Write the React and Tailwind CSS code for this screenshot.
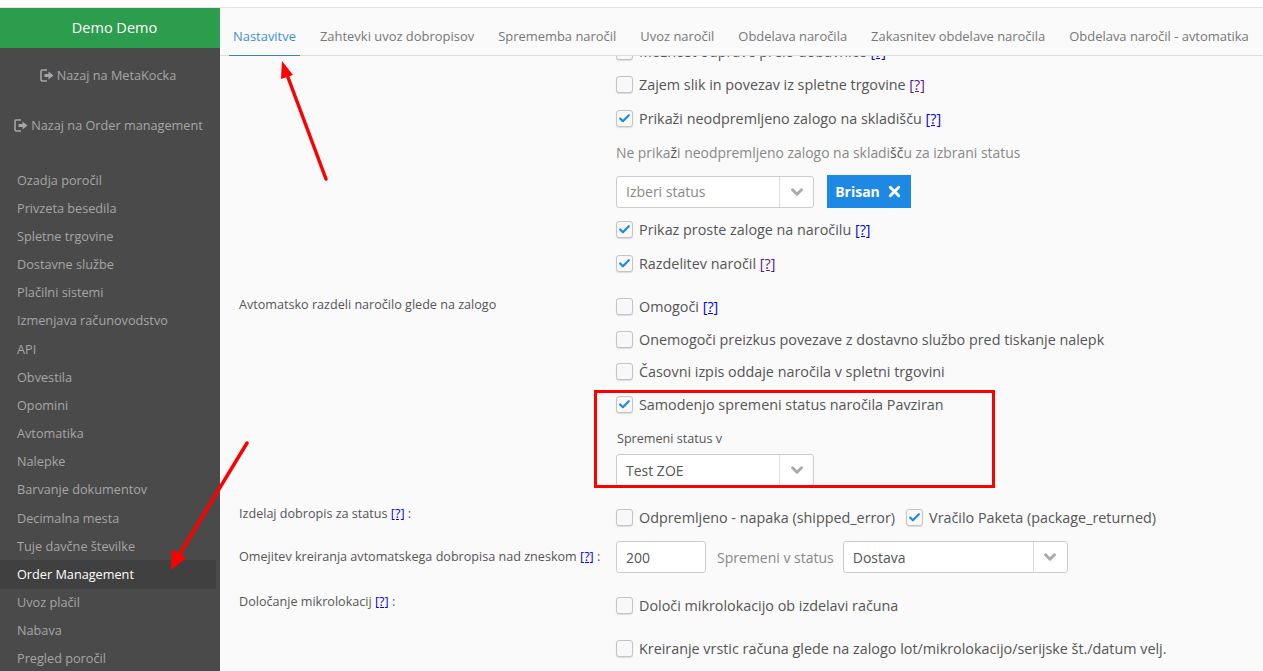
import { ChevronDown, X, Check } from "lucide-react";

const MENU = [
  "Ozadja poročil", "Privzeta besedila", "Spletne trgovine", "Dostavne službe", "Plačilni sistemi",
  "Izmenjava računovodstvo", "API", "Obvestila", "Opomini", "Avtomatika", "Nalepke",
  "Barvanje dokumentov", "Decimalna mesta", "Tuje davčne številke", "Order Management",
  "Uvoz plačil", "Nabava", "Pregled poročil",
];

const TABS = [
  "Nastavitve", "Zahtevki uvoz dobropisov", "Sprememba naročil", "Uvoz naročil",
  "Obdelava naročila", "Zakasnitev obdelave naročila", "Obdelava naročil - avtomatika",
];

function Help({ visited }) {
  return <span className={`underline ${visited ? "text-[#551a8b]" : "text-[#0000ee]"}`}>[?]</span>;
}

function Box({ checked }) {
  return (
    <span className="flex h-[17px] w-[17px] shrink-0 items-center justify-center rounded-[3px] border border-[#c4c4c4] bg-[#f8f8f8] shadow-[0_1px_1px_rgba(0,0,0,0.12)]">
      {checked && <Check size={13} strokeWidth={4} className="text-[#1e88e5]" />}
    </span>
  );
}

function Option({ checked, children, className = "" }) {
  return (
    <span className={`flex items-center gap-[6px] ${className}`}>
      <Box checked={checked} />
      <span className="whitespace-nowrap text-[14.35px]">{children}</span>
    </span>
  );
}

function Select({ value, placeholder, width = "w-[198px]" }) {
  return (
    <div className={`flex h-[32px] ${width} items-stretch rounded-[3px] border border-[#ccc] bg-white`}>
      <span className={`flex flex-1 items-center pl-[9px] ${placeholder ? "text-[#888]" : "text-[#555]"}`}>{value}</span>
      <span className="flex w-[34px] items-center justify-center border-l border-[#ddd]">
        <ChevronDown size={18} strokeWidth={4} className="text-[#aaa]" />
      </span>
    </div>
  );
}

function Row({ h, label, labelClass = "", className = "", children }) {
  return (
    <div className={`grid grid-cols-[377px_1fr] items-center ${className}`} style={{ height: h }}>
      <div className={`whitespace-nowrap text-[12.6px] text-[#555] ${labelClass}`}>{label}</div>
      <div className="flex items-center">{children}</div>
    </div>
  );
}

function LogOutGlyph() {
  return (
    <svg width="14" height="13" viewBox="0 0 14 13" className="shrink-0">
      <path d="M7 1H2.2C1.5 1 1 1.5 1 2.2v8.6c0 .7.5 1.2 1.2 1.2H7" fill="none" stroke="currentColor" strokeWidth="1.6" />
      <path d="M4.5 5h4V2.4L13.5 6.5 8.5 10.6V8h-4z" fill="currentColor" />
    </svg>
  );
}

function Sidebar() {
  return (
    <aside className="w-[220px] shrink-0 bg-[#4a4a4a] text-[12.7px] text-[#a6a6a6]">
      <div className="flex h-[40px] items-center justify-center bg-[#2c9c4d] pl-[9px] text-[14.5px] text-white">Demo Demo</div>
      <div className="flex h-[54px] items-center justify-center gap-[3px] pt-[1px] pr-[4px]">
        <LogOutGlyph />
        Nazaj na MetaKocka
      </div>
      <div className="flex h-[46px] items-center justify-center gap-[3px] pr-[3px] pt-[1px]">
        <LogOutGlyph />
        Nazaj na Order management
      </div>
      <nav className="pt-[18px]">
        {MENU.map((item) => {
          const active = item === "Order Management";
          return (
            <div
              key={item}
              className={`flex h-[28.18px] items-center pl-[17px] ${active ? "mr-[4px] bg-[#404040] text-white" : ""}`}
            >
              {item}
            </div>
          );
        })}
      </nav>
    </aside>
  );
}

function Overlay() {
  return (
    <>
      <svg className="pointer-events-none absolute left-0 top-0" width="1263" height="671">
        <g stroke="#f00" strokeWidth="3.5" strokeLinecap="round">
          <line x1="326" y1="179" x2="286" y2="72" />
          <line x1="247" y1="443" x2="176" y2="560" />
        </g>
        <polygon points="282,61 293,75 281,79" fill="#f00" />
        <polygon points="171,570 172,549 186,558" fill="#f00" />
      </svg>
      <div className="pointer-events-none absolute left-[594px] top-[390px] h-[98px] w-[401px] border-[3px] border-[#f00]" />
    </>
  );
}

export default function App() {
  return (
    <div className="relative h-[671px] w-[1263px] overflow-hidden bg-[#fafafa] font-['Open_Sans',sans-serif] text-[14px] text-[#555]">
      <div className="h-[8px] border-b border-[#e4e4e4] bg-white" />
      <div className="flex h-[663px]">
        <Sidebar />
        <main className="min-w-0 flex-1 overflow-hidden">
          <div className="relative z-10 flex h-[48px] items-end border-b border-[#ddd] bg-[#fafafa] pl-[9px] text-[12.95px]">
            {TABS.map((tab, i) => (
              <div
                key={tab}
                className={`-mb-px flex h-[38px] items-center whitespace-nowrap px-[4px] ${i < TABS.length - 1 ? "mr-[16px]" : ""} ${
                  i === 0 ? "border-b border-[#3b7fc4] text-[#3f8fd8]" : "border-b border-transparent text-[#777]"
                }`}
              >
                {tab}
              </div>
            ))}
          </div>
          <div className="-mt-[21px] pl-[19px]">
            <Row h="33px"><Option>Možnost odprave prelo dobavnice <Help /></Option></Row>
            <Row h="34px"><Option>Zajem slik in povezav iz spletne trgovine <Help visited /></Option></Row>
            <Row h="33px"><Option checked>Prikaži neodpremljeno zalogo na skladišču <Help /></Option></Row>
            <Row h="36px">
              <span className="whitespace-nowrap text-[13.9px] text-[#888]">
                Ne prika<span className="text-[#555]">ž</span>i neodpremljeno zalogo na skladi<span className="text-[#555]">šč</span>u za izbrani status
              </span>
            </Row>
            <Row h="41px">
              <Select value="Izberi status" placeholder />
              <button className="ml-[13px] flex h-[33px] w-[84px] items-center justify-center gap-[6px] bg-[#1e88e5] font-bold text-white">
                Brisan <X size={17} strokeWidth={4} />
              </button>
            </Row>
            <Row h="35px"><Option checked>Prikaz proste zaloge na naročilu <Help /></Option></Row>
            <Row h="33px"><Option checked>Razdelitev naročil <Help visited /></Option></Row>
            <Row h="44px" className="pt-[10px]" labelClass="pb-[4px]" label="Avtomatsko razdeli naročilo glede na zalogo">
              <Option>Omogoči <Help /></Option>
            </Row>
            <Row h="32px"><Option>Onemogoči preizkus povezave z dostavno službo pred tiskanje nalepk</Option></Row>
            <Row h="32px"><Option>Časovni izpis oddaje naročila v spletni trgovini</Option></Row>
            <Row h="33px"><Option checked>Samodenjo spremeni status naročila Pavziran</Option></Row>
            <Row h="33px" className="pt-[4px]"><span className="ml-px text-[12.6px]">Spremeni status v</span></Row>
            <Row h="32px"><Select value="Test ZOE" /></Row>
            <Row h="54px" className="pt-[10px]" labelClass="pb-[8px]" label={<>Izdelaj dobropis za status <Help /> :</>}>
              <Option>Odpremljeno - napaka (shipped_error)</Option>
              <Option checked className="ml-[11px]">Vračilo Paketa (package_returned)</Option>
            </Row>
            <Row h="34px" label={<>Omejitev kreiranja avtomatskega dobropisa nad zneskom <Help /> :</>}>
              <div className="flex h-[32px] w-[90px] items-center rounded-[3px] border border-[#ccc] bg-white pl-[9px]">200</div>
              <span className="ml-[11px] text-[#888]">Spremeni v status</span>
              <div className="ml-[9px]"><Select value="Dostava" width="w-[225px]" /></div>
            </Row>
            <Row h="59px" className="pt-[5px]" labelClass="pb-[8px]" label={<>Določanje mikrolokacij <Help /> :</>}>
              <Option>Določi mikrolokacijo ob izdelavi računa</Option>
            </Row>
            <Row h="60px" className="pt-[3px] pb-[32px]"><Option>Kreiranje vrstic računa glede na zalogo lot/mikrolokacijo/serijske št./datum velj.</Option></Row>
          </div>
        </main>
      </div>
      <Overlay />
    </div>
  );
}
